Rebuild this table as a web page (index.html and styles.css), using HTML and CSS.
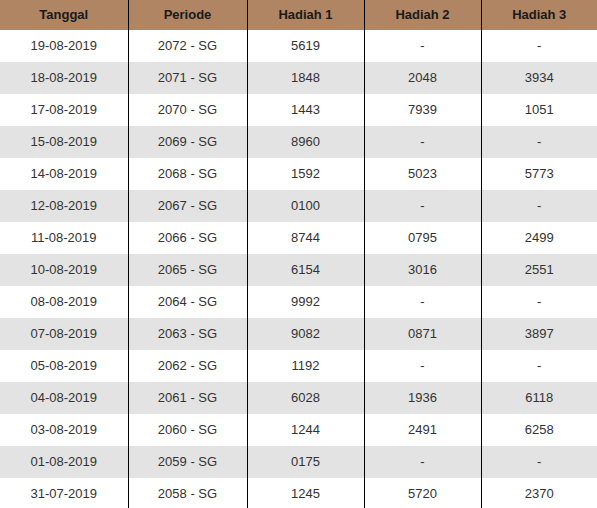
FILE: index.html
```html
<!DOCTYPE html>
<html>
<head>
<meta charset="utf-8">
<link rel="stylesheet" href="styles.css">
</head>
<body>
<table class="result">
  <colgroup>
    <col class="c1"><col class="c2"><col class="c3"><col class="c4"><col class="c5">
  </colgroup>
  <thead>
    <tr><th>Tanggal</th><th>Periode</th><th>Hadiah 1</th><th>Hadiah 2</th><th>Hadiah 3</th></tr>
  </thead>
  <tbody>
    <tr><td>19-08-2019</td><td>2072 - SG</td><td>5619</td><td>-</td><td>-</td></tr>
    <tr><td>18-08-2019</td><td>2071 - SG</td><td>1848</td><td>2048</td><td>3934</td></tr>
    <tr><td>17-08-2019</td><td>2070 - SG</td><td>1443</td><td>7939</td><td>1051</td></tr>
    <tr><td>15-08-2019</td><td>2069 - SG</td><td>8960</td><td>-</td><td>-</td></tr>
    <tr><td>14-08-2019</td><td>2068 - SG</td><td>1592</td><td>5023</td><td>5773</td></tr>
    <tr><td>12-08-2019</td><td>2067 - SG</td><td>0100</td><td>-</td><td>-</td></tr>
    <tr><td>11-08-2019</td><td>2066 - SG</td><td>8744</td><td>0795</td><td>2499</td></tr>
    <tr><td>10-08-2019</td><td>2065 - SG</td><td>6154</td><td>3016</td><td>2551</td></tr>
    <tr><td>08-08-2019</td><td>2064 - SG</td><td>9992</td><td>-</td><td>-</td></tr>
    <tr><td>07-08-2019</td><td>2063 - SG</td><td>9082</td><td>0871</td><td>3897</td></tr>
    <tr><td>05-08-2019</td><td>2062 - SG</td><td>1192</td><td>-</td><td>-</td></tr>
    <tr><td>04-08-2019</td><td>2061 - SG</td><td>6028</td><td>1936</td><td>6118</td></tr>
    <tr><td>03-08-2019</td><td>2060 - SG</td><td>1244</td><td>2491</td><td>6258</td></tr>
    <tr><td>01-08-2019</td><td>2059 - SG</td><td>0175</td><td>-</td><td>-</td></tr>
    <tr><td>31-07-2019</td><td>2058 - SG</td><td>1245</td><td>5720</td><td>2370</td></tr>
  </tbody>
</table>
</body>
</html>
```
FILE: styles.css
```css
html, body {
  margin: 0;
  padding: 0;
  background: #ffffff;
}
body {
  font-family: "Liberation Sans", Arial, sans-serif;
  font-size: 13px;
  color: #333333;
  overflow: hidden;
}
.result {
  width: 597px;
  border-collapse: collapse;
  table-layout: fixed;
}
.c1 { width: 128px; }
.c2 { width: 119px; }
.c3 { width: 117px; }
.c4 { width: 117px; }
.c5 { width: 116px; }
.result th,
.result td {
  padding: 0;
  text-align: center;
  border-right: 1px solid #000000;
  box-sizing: border-box;
}
.result th:last-child,
.result td:last-child {
  border-right: none;
}
.result th {
  height: 30px;
  padding-bottom: 1px;
  background: #b08563;
  color: #1a1a1a;
  font-weight: bold;
  font-size: 13px;
}
.result td {
  height: 32px;
  padding-bottom: 2px;
}
.result tbody tr:nth-child(even) td {
  background: #e3e3e3;
}
```
